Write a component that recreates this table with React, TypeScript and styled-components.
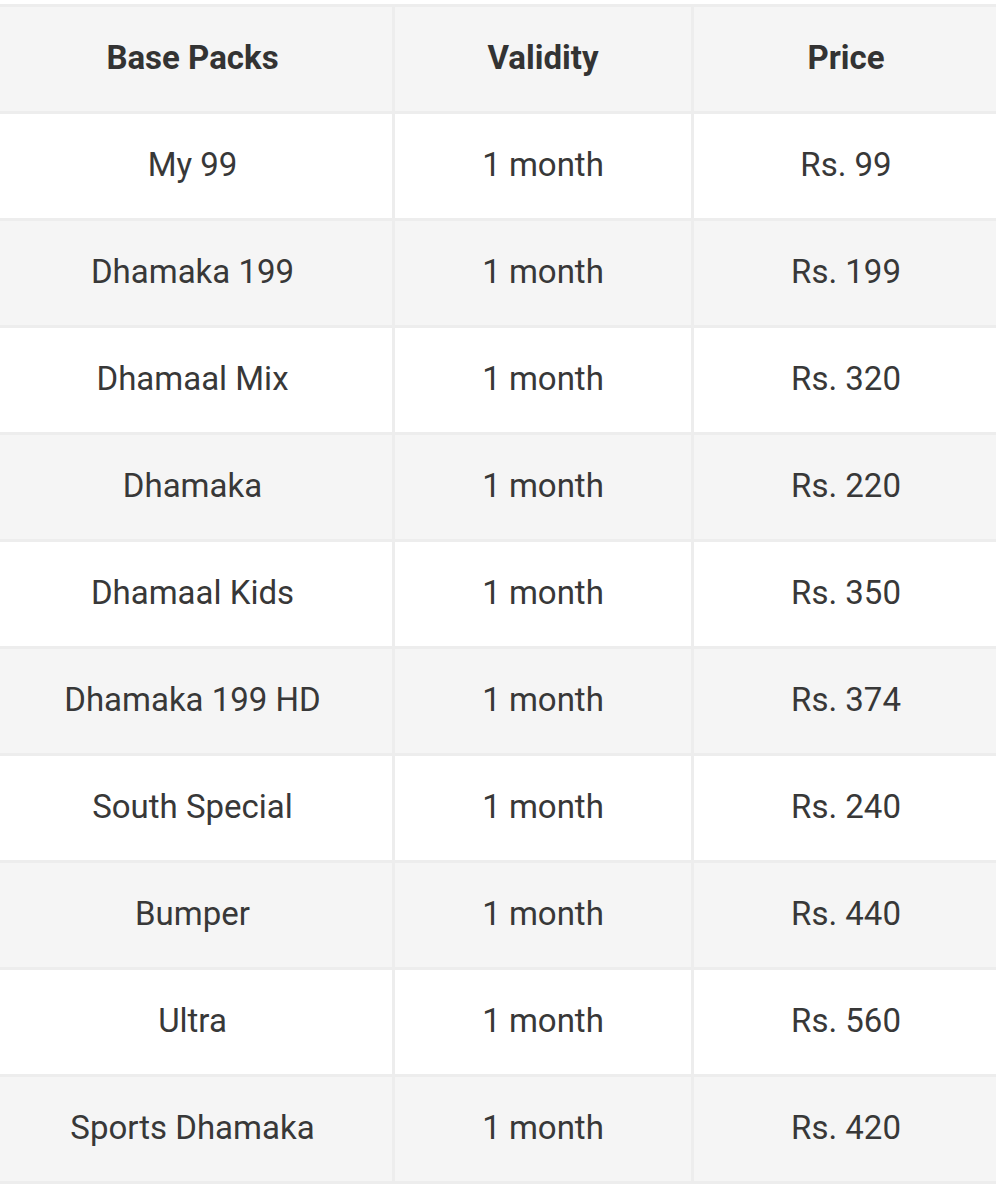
import styled, { createGlobalStyle } from 'styled-components';

const GlobalStyle = createGlobalStyle`
  body {
    margin: 0;
    background: #ffffff;
    font-family: Roboto, 'Noto Sans', Arial, sans-serif;
    color: #333333;
  }
`;

const packs = [
  { name: 'My 99', validity: '1 month', price: 'Rs. 99' },
  { name: 'Dhamaka 199', validity: '1 month', price: 'Rs. 199' },
  { name: 'Dhamaal Mix', validity: '1 month', price: 'Rs. 320' },
  { name: 'Dhamaka', validity: '1 month', price: 'Rs. 220' },
  { name: 'Dhamaal Kids', validity: '1 month', price: 'Rs. 350' },
  { name: 'Dhamaka 199 HD', validity: '1 month', price: 'Rs. 374' },
  { name: 'South Special', validity: '1 month', price: 'Rs. 240' },
  { name: 'Bumper', validity: '1 month', price: 'Rs. 440' },
  { name: 'Ultra', validity: '1 month', price: 'Rs. 560' },
  { name: 'Sports Dhamaka', validity: '1 month', price: 'Rs. 420' },
];

const Wrapper = styled.div`
  overflow: hidden;
  width: 996px;
  padding-top: 4px;
`;

const Table = styled.table`
  margin-left: -10px;
  width: 1008px;
  border-collapse: collapse;
  table-layout: fixed;
  font-size: 33px;
  line-height: 1.2;
`;

const Col = styled.col<{ $w: number }>`
  width: ${(p) => p.$w}px;
`;

const Row = styled.tr<{ $shaded: boolean }>`
  height: 107px;
  background: ${(p) => (p.$shaded ? '#f5f5f5' : '#ffffff')};
`;

const HeadCell = styled.th`
  border: 3px solid #ededed;
  padding: 0 0 3px;
  text-align: center;
  vertical-align: middle;
  font-weight: 700;
  color: #333333;
`;

const Cell = styled.td`
  border: 3px solid #ededed;
  padding: 0 0 3px;
  text-align: center;
  vertical-align: middle;
  font-weight: 400;
  color: #383838;
`;

export default function App() {
  return (
    <>
      <GlobalStyle />
      <Wrapper>
        <Table>
          <colgroup>
            <Col $w={402} />
            <Col $w={299} />
            <Col $w={307} />
          </colgroup>
          <thead>
            <Row $shaded>
              <HeadCell>Base Packs</HeadCell>
              <HeadCell>Validity</HeadCell>
              <HeadCell>Price</HeadCell>
            </Row>
          </thead>
          <tbody>
            {packs.map((p, i) => (
              <Row key={p.name} $shaded={i % 2 === 1}>
                <Cell>{p.name}</Cell>
                <Cell>{p.validity}</Cell>
                <Cell>{p.price}</Cell>
              </Row>
            ))}
          </tbody>
        </Table>
      </Wrapper>
    </>
  );
}
